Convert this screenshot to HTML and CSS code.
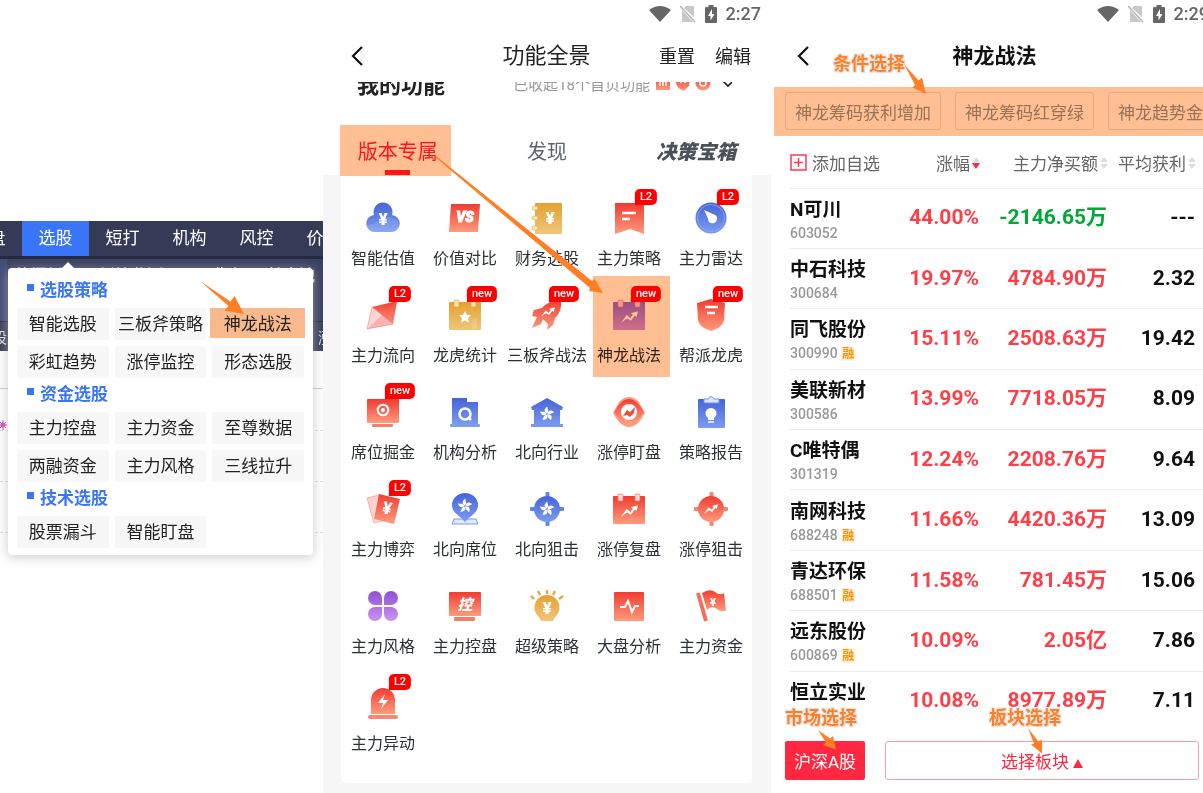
FILE: index.html
```html
<!DOCTYPE html>
<html lang="zh-CN">
<head>
<meta charset="utf-8">
<title>神龙战法</title>
<link rel="stylesheet" href="styles.css">
</head>
<body>
<!-- градиенты и общие значки -->
<svg class="defs" width="0" height="0" aria-hidden="true">
  <defs>
    <linearGradient id="red" x1="0" y1="0" x2="0" y2="1"><stop offset="0" stop-color="#f03c32"/><stop offset="1" stop-color="#ff9b7c"/></linearGradient>
    <linearGradient id="blue" x1="0" y1="0" x2="0" y2="1"><stop offset="0" stop-color="#4663d8"/><stop offset="1" stop-color="#7c9cf0"/></linearGradient>
    <linearGradient id="gold" x1="0" y1="0" x2="0" y2="1"><stop offset="0" stop-color="#e5a02f"/><stop offset="1" stop-color="#efc67c"/></linearGradient>
    <linearGradient id="violet" x1="0" y1="0" x2="0" y2="1"><stop offset="0" stop-color="#8d50d4"/><stop offset="1" stop-color="#cc92ee"/></linearGradient>
    <linearGradient id="plum" x1="0" y1="0" x2="0" y2="1"><stop offset="0" stop-color="#9a66e0"/><stop offset="1" stop-color="#d094f0"/></linearGradient>
    <linearGradient id="pink" x1="0" y1="0" x2="1" y2="1"><stop offset="0" stop-color="#ffc9c9"/><stop offset="1" stop-color="#ffe6e6"/></linearGradient>
    <symbol id="wifi" viewBox="0 0 22 16"><path d="M0 4Q11-4 22 4L11 16Z" fill="#666"/></symbol>
    <symbol id="sim" viewBox="0 0 16 18"><path d="M6 1h8v11L4 3zM2 5l11 12H2z" fill="#c8c8c8"/><path d="M0 1l15 16" stroke="#b4b4b4" stroke-width="1.5"/></symbol>
    <symbol id="battery" viewBox="0 0 12 18"><path d="M3.500 2V0h5v2H11a1 1 0 0 1 1 1v14a1 1 0 0 1-1 1H1a1 1 0 0 1-1-1V3a1 1 0 0 1 1-1z" fill="#666"/><path d="M7 4L3 11h2.500v4.500L9.500 9H7z" fill="#fff"/></symbol>
    <symbol id="back" viewBox="0 0 14 22"><path d="M12 2L3 11l9 9" fill="none" stroke="#111" stroke-width="2.200"/></symbol>
    <symbol id="flower" viewBox="0 0 16 16"><g fill="#fff"><path id="petal" d="M8 7.500C4.500 6 5 2.500 8.500.5 8 3 10.500 4 8 7.500z"/><use href="#petal" transform="rotate(72 8 8)"/><use href="#petal" transform="rotate(144 8 8)"/><use href="#petal" transform="rotate(216 8 8)"/><use href="#petal" transform="rotate(288 8 8)"/></g></symbol>
    <symbol id="bolt" viewBox="0 0 18 12"><path d="M0 12L6 4l4 3 2.500-3.500L10.500 2 18 0l-1.500 6-1.800-1.500L10.500 10 6.500 7.500z" fill="#fff"/></symbol>
    <symbol id="sort" viewBox="0 0 8 12"><path d="M4 0l4 5H0zM4 12l4-5H0z" fill="#ddd"/></symbol>
    <symbol id="sortdown" viewBox="0 0 8 12"><path d="M4 0l4 5H0z" fill="#ddd"/><path d="M4 12l4-6H0z" fill="#ff2840"/></symbol>
  </defs>
</svg>

<div class="page">

<!-- PC menu -->
<section class="desktop">
  <nav class="topnav">
    <a href="#">大盘</a>
    <a href="#" class="active">选股</a>
    <a href="#">短打</a>
    <a href="#">机构</a>
    <a href="#">风控</a>
    <a href="#">价投</a>
  </nav>
  <div class="toolbar"><span>热门板块</span><span>板块监测</span><span>股票期权</span><span>基金池</span></div>
  <div class="tablebar"><span>股</span><span>涨</span></div>
  <div class="chart">
    <svg class="star" width="8" height="10" viewBox="0 0 8 10"><path d="M3 0v10M-1 5h8M0 2l6 6M6 2L0 8" stroke="#d54ac0" stroke-width="1"/><circle cx="3" cy="5" r="2.500" fill="#d54ac0"/></svg>
    <div class="line"></div>
    <div class="line"></div>
    <div class="line"></div>
  </div>

  <div class="dropdown">
    <h2>选股策略</h2>
    <div class="choices">
      <button>智能选股</button><button>三板斧策略</button><button class="picked">神龙战法</button>
      <button>彩虹趋势</button><button>涨停监控</button><button>形态选股</button>
    </div>
    <h2>资金选股</h2>
    <div class="choices">
      <button>主力控盘</button><button>主力资金</button><button>至尊数据</button>
      <button>两融资金</button><button>主力风格</button><button>三线拉升</button>
    </div>
    <h2>技术选股</h2>
    <div class="choices">
      <button>股票漏斗</button><button>智能盯盘</button>
    </div>
  </div>
  <svg class="arrows" aria-hidden="true"><polygon points="200,281 230.500,301.500 234.500,296 244,314 224.500,310.500 228.500,306"/></svg>
</section>

<!-- functions -->
<section class="phone functions">
  <div class="status">
    <svg width="22" height="16"><use href="#wifi"/></svg>
    <svg width="16" height="18"><use href="#sim"/></svg>
    <svg width="12" height="18"><use href="#battery"/></svg>
    <span>2:27</span>
  </div>
  <header class="bar">
    <button class="back" aria-label="返回"><svg width="14" height="22"><use href="#back"/></svg></button>
    <h1>功能全景</h1>
    <div class="actions"><button>重置</button><button>编辑</button></div>
  </header>
  <div class="mine">
    <div class="mine-row">
      <strong>我的功能</strong>
      <span class="folded">已收起18个首页功能</span>
      <svg width="76" height="16" viewBox="0 0 76 16">
        <path d="M0 1h14v14H0z" fill="url(#red)"/><path d="M4 7v4M7 5v6M10 7v4" stroke="#fff" stroke-width="1.500"/>
        <path d="M20 3l6-2 8 2-1 8-5 5-6-3-2-5z" fill="url(#red)"/><path d="M24 8l3-2 2 2 4-3" stroke="#fff" fill="none"/>
        <circle cx="47" cy="8" r="7.500" fill="url(#red)"/><circle cx="47" cy="8" r="3" fill="none" stroke="#fff" stroke-width="1.500"/>
        <path d="M67 6l5 5 5-5" fill="none" stroke="#222" stroke-width="1.600"/>
      </svg>
    </div>
  </div>
  <div class="tabs">
    <button class="on">版本专属</button>
    <button>发现</button>
    <button class="fancy">决策宝箱</button>
  </div>
  <div class="card">
  <div class="grid">
    <a href="#"><svg viewBox="0 0 32 32"><path d="M7 13A9.500 9.500 0 1 1 25 13 8.500 8.500 0 0 1 23.500 30H8.500A8.500 8.500 0 0 1 7 13z" fill="url(#blue)"/><path d="M0 23q9-1 15-6t16 2q3 10-7 11H8q-7 0-8-7z" fill="#fff" opacity=".12"/><text x="16" y="23" class="yen">¥</text></svg>智能估值</a>
    <a href="#"><svg viewBox="0 0 32 32"><path d="M2 2h29l-2 28H0z" fill="url(#red)"/><text x="16" y="20" class="vs">VS</text></svg>价值对比</a>
    <a href="#"><svg viewBox="0 0 32 32"><rect x="4" y="1" width="27" height="31" rx="1" fill="url(#gold)"/><g fill="#fde6b4" stroke="#e5ad50" stroke-width=".7"><rect x="1" y="4" width="6" height="4" rx="2"/><rect x="1" y="14" width="6" height="4" rx="2"/><rect x="1" y="24" width="6" height="4" rx="2"/></g><text x="19" y="22" class="yen">¥</text></svg>财务选股</a>
    <a href="#"><b>L2</b><svg viewBox="0 0 32 32"><path d="M2 1h29v31l-14-5-15 5z" fill="url(#red)"/><path d="M9 11h14M9 17h8" stroke="#fff" stroke-width="2.500"/></svg>主力策略</a>
    <a href="#"><b>L2</b><svg viewBox="0 0 32 32"><circle cx="16" cy="16" r="15.500" fill="url(#blue)"/><circle cx="16" cy="16" r="13.500" fill="none" stroke="#8fa8f4" stroke-width=".8"/><path d="M9 8l10 4.500a4.500 4.500 0 1 1-6 4z" fill="#fff"/></svg>主力雷达</a>

    <a href="#"><b>L2</b><svg viewBox="0 0 32 32"><path d="M5 8l25-6-4 23z" fill="url(#red)"/><path d="M5 8l21 17-26 5z" fill="url(#pink)" stroke="#f28a80" stroke-width=".6"/><path d="M30 2L0 30l26-5z" fill="#f1695c" opacity=".35"/></svg>主力流向</a>
    <a href="#"><b>new</b><svg viewBox="0 0 32 32"><rect y="3" width="32" height="28" rx="1" fill="url(#gold)"/><g fill="#fbe3b5" stroke="#e0a440" stroke-width=".7"><rect x="5" y="1" width="5" height="7" rx="1"/><rect x="22" y="1" width="5" height="7" rx="1"/></g><path d="M16 12l1.800 3.800 4.200.5-3 2.900.8 4.300-3.800-2-3.800 2 .8-4.300-3-2.900 4.200-.5z" fill="#fff"/><path d="M23 30v-9l5-3v12z" fill="#fff" opacity=".15"/></svg>龙虎统计</a>
    <a href="#"><b>new</b><svg viewBox="0 0 32 32"><path d="M30 1Q18 1 11 9L3 11 1 17l5 1-5 11 9-4 2-5 5 5-1 6 6-5 2-7Q31 13 30 1z" fill="url(#red)"/><use href="#bolt" x="10" y="8" width="14" height="10"/></svg>三板斧战法</a>
    <a href="#"><b>new</b><svg viewBox="0 0 32 32"><rect y="3" width="32" height="28" rx="1" fill="url(#plum)"/><g fill="#ffc9e0" stroke="#c98ae0" stroke-width=".7"><rect x="5" y="1" width="5" height="7" rx="1"/><rect x="22" y="1" width="5" height="7" rx="1"/></g><use href="#bolt" x="8" y="12" width="17" height="12"/></svg>神龙战法</a>
    <a href="#"><b>new</b><svg viewBox="0 0 32 32"><path d="M2 4l14-4 14 4-1 17c-1 6-7 9-13 11C10 30 4 27 3 21z" fill="url(#red)"/><path d="M10 8h13M12 14h8" stroke="#fff" stroke-width="2.500"/></svg>帮派龙虎</a>

    <a href="#"><b>new</b><svg viewBox="0 0 32 32"><rect y="3" width="32" height="24" rx="1" fill="url(#red)"/><rect x="5" y="28" width="21" height="3" rx="1" fill="#f0806a"/><circle cx="16" cy="14" r="5.300" fill="none" stroke="#fff" stroke-width="2"/><circle cx="16" cy="14" r="2" fill="#fff"/></svg>席位掘金</a>
    <a href="#"><svg viewBox="0 0 32 32"><path d="M3 2h15v4h11v23H3z" fill="url(#blue)"/><rect x="1" y="28" width="30" height="3" rx="1" fill="#7c9cf0"/><circle cx="16" cy="18" r="5.500" fill="none" stroke="#fff" stroke-width="2.500"/><path d="M19 21l3 3" stroke="#fff" stroke-width="2.500"/></svg>机构分析</a>
    <a href="#"><svg viewBox="0 0 32 32"><path d="M16 2L0 11l1 3h2v14H0v3h32v-3h-3V14h2l1-3z" fill="url(#blue)"/><use href="#flower" x="8" y="10" width="16" height="16"/></svg>北向行业</a>
    <a href="#"><svg viewBox="0 0 32 32"><path d="M0 17Q3 12 6 6 16-4 26 6q3 6 6 11-3 5-6 9-10 10-20 0-3-4-6-9z" fill="#ff9b7c"/><path d="M1 16Q8 3 16 3t15 13q-7 11-15 11T1 16z" fill="url(#red)"/><circle cx="16" cy="16" r="8" fill="#fff"/><path d="M10 20l4-6 3 2 5-5-1 6-4 4-3-2z" fill="#ed4e3b"/></svg>涨停盯盘</a>
    <a href="#"><svg viewBox="0 0 32 32"><rect x="3" y="3" width="27" height="29" rx="1" fill="url(#blue)"/><path d="M9 7V3h4q3-5 6 0h5v4z" fill="#dce5ff" stroke="#7190ed"/><path d="M13 22a5.500 5.500 0 1 1 6 0v2h-6z" fill="#fff"/><path d="M13 26h6" stroke="#fff" stroke-width="1.500"/></svg>策略报告</a>

    <a href="#"><b>L2</b><svg viewBox="0 0 32 32"><path d="M0 5l12-3 7 25-12 3z" fill="url(#pink)" stroke="#f39a90" stroke-width=".7"/><path d="M12 1l21 5-6 25-20-5z" fill="url(#red)"/><text x="20" y="21" class="yen" transform="rotate(12 20 16)">¥</text></svg>主力博弈</a>
    <a href="#"><svg viewBox="0 0 32 32"><path d="M5 26h22l2 5H3z" fill="#e1e9ff" stroke="#7998e9"/><path d="M16 29C10 22 3 20 3 12a13 12 0 0 1 26 0c0 8-7 10-13 17z" fill="url(#blue)"/><use href="#flower" x="8" y="5" width="16" height="16"/></svg>北向席位</a>
    <a href="#"><svg viewBox="0 0 32 32"><g fill="#6685e4"><rect x="14.500" y="-1" width="4" height="8" rx="1"/><rect x="14.500" y="25" width="4" height="8" rx="1"/><rect x="-1" y="14" width="8" height="4" rx="1"/><rect x="25" y="14" width="8" height="4" rx="1"/></g><circle cx="16" cy="16" r="13" fill="url(#blue)"/><use href="#flower" x="8" y="8" width="16" height="16"/></svg>北向狙击</a>
    <a href="#"><svg viewBox="0 0 32 32"><rect y="3" width="32" height="28" rx="1" fill="url(#red)"/><g fill="#ffd9d2" stroke="#ee7365" stroke-width=".7"><rect x="5" y="1" width="5" height="7" rx="1"/><rect x="22" y="1" width="5" height="7" rx="1"/></g><use href="#bolt" x="8" y="12" width="17" height="12"/></svg>涨停复盘</a>
    <a href="#"><svg viewBox="0 0 32 32"><g fill="#f7836d"><rect x="14.500" y="-1" width="4" height="8" rx="1"/><rect x="14.500" y="25" width="4" height="8" rx="1"/><rect x="-1" y="14" width="8" height="4" rx="1"/><rect x="25" y="14" width="8" height="4" rx="1"/></g><circle cx="16" cy="16" r="13" fill="url(#red)"/><use href="#bolt" x="9" y="11" width="14" height="10"/></svg>涨停狙击</a>

    <a href="#"><svg viewBox="0 0 32 32"><path d="M15 15H8a7 7 0 1 1 7-7zM17 15V8a7 7 0 1 1 7 7zM15 17v7a7 7 0 1 1-7-7zM17 17h7a7 7 0 1 1-7 7z" fill="url(#violet)"/></svg>主力风格</a>
    <a href="#"><svg viewBox="0 0 32 32"><rect y="2" width="32" height="24" rx="1" fill="url(#red)"/><rect x="5" y="27" width="21" height="4" rx="1" fill="#f0806a"/><text x="16" y="20" class="kong">控</text></svg>主力控盘</a>
    <a href="#"><svg viewBox="0 0 32 32"><path d="M10 31q-1-3-4-6a12.500 12.500 0 1 1 20 0q-3 3-4 6z" fill="url(#gold)"/><path d="M3 9l-3-3M9 5L7 1M16 4V0M22 5l2-4M28 9l4-3" stroke="#e9aa44" stroke-width="2.500"/><text x="16" y="24" class="yen">¥</text></svg>超级策略</a>
    <a href="#"><svg viewBox="0 0 32 32"><rect x="1" y="2" width="30" height="29" rx="1" fill="url(#red)"/><path d="M7 17h5l3-6 4 11 3-6h4" fill="none" stroke="#fff" stroke-width="2"/></svg>大盘分析</a>
    <a href="#"><svg viewBox="0 0 32 32"><path d="M7 3q8-5 13-1t9 1l2 17q-4 3-9-1t-10 1z" fill="url(#red)"/><path d="M3 3l8 28" stroke="#f0725c" stroke-width="4"/><text x="18" y="16" class="yen small">¥</text></svg>主力资金</a>

    <a href="#"><b>L2</b><svg viewBox="0 0 32 32"><path d="M4 27V13a12 12 0 0 1 24 0v14z" fill="url(#red)"/><rect x="1" y="28" width="30" height="4" rx="2" fill="#f58a70"/><path d="M18 7l-7 9h5l-2 6 7-9h-5z" fill="#fff"/></svg>主力异动</a>
  </div>
  </div>
  <div class="mark mark-tab"></div>
  <div class="mark mark-item"></div>
  <svg class="arrows" aria-hidden="true"><polygon points="113,156 269,281 272,279 280,293 266,291 267,288 112,157"/></svg>
</section>

<!-- stock list -->
<section class="phone stocks">
  <div class="screen">
  <div class="status">
    <svg width="22" height="16"><use href="#wifi"/></svg>
    <svg width="16" height="18"><use href="#sim"/></svg>
    <svg width="12" height="18"><use href="#battery"/></svg>
    <span>2:29</span>
  </div>
  <header class="bar">
    <button class="back" aria-label="返回"><svg width="14" height="22"><use href="#back"/></svg></button>
    <h1>神龙战法</h1>
  </header>
  <div class="chips">
    <button>神龙筹码获利增加</button>
    <button>神龙筹码红穿绿</button>
    <button>神龙趋势金叉</button>
  </div>
  </div>
  <table>
    <thead>
      <tr>
        <th class="name"><button><svg width="17" height="17" viewBox="0 0 17 17"><path d="M1 1h15v15H1zM8.500 4v9M4 8.500h9" fill="none" stroke="#ff3850" stroke-width="1.500"/></svg>添加自选</button></th>
        <th class="rise"><button>涨幅<svg width="8" height="12"><use href="#sortdown"/></svg></button></th>
        <th class="amount"><button>主力净买额<svg width="8" height="12"><use href="#sort"/></svg></button></th>
        <th><button>平均获利<svg width="8" height="12"><use href="#sort"/></svg></button></th>
      </tr>
    </thead>
    <tbody>
      <tr><td><strong>N可川</strong><small>603052</small></td><td>44.00%</td><td class="down">-2146.65万</td><td>---</td></tr>
      <tr><td><strong>中石科技</strong><small>300684</small></td><td>19.97%</td><td>4784.90万</td><td>2.32</td></tr>
      <tr><td><strong>同飞股份</strong><small>300990 <i>融</i></small></td><td>15.11%</td><td>2508.63万</td><td>19.42</td></tr>
      <tr><td><strong>美联新材</strong><small>300586</small></td><td>13.99%</td><td>7718.05万</td><td>8.09</td></tr>
      <tr><td><strong>C唯特偶</strong><small>301319</small></td><td>12.24%</td><td>2208.76万</td><td>9.64</td></tr>
      <tr><td><strong>南网科技</strong><small>688248 <i>融</i></small></td><td>11.66%</td><td>4420.36万</td><td>13.09</td></tr>
      <tr><td><strong>青达环保</strong><small>688501 <i>融</i></small></td><td>11.58%</td><td>781.45万</td><td>15.06</td></tr>
      <tr><td><strong>远东股份</strong><small>600869 <i>融</i></small></td><td>10.09%</td><td>2.05亿</td><td>7.86</td></tr>
      <tr><td><strong>恒立实业</strong><small></small></td><td>10.08%</td><td>8977.89万</td><td>7.11</td></tr>
    </tbody>
  </table>
  <footer>
    <button class="market">沪深A股</button>
    <button class="sector">选择板块 <svg width="10" height="9"><path d="M5 0l5 9H0z" fill="#ff2840"/></svg></button>
  </footer>
  <div class="mark mark-chips"></div>
  <span class="note note-filter">条件选择</span>
  <span class="note note-market">市场选择</span>
  <span class="note note-sector">板块选择</span>
  <svg class="arrows" aria-hidden="true">
    <polygon points="133,64 147.500,80.500 151,77.500 155,94 141.500,87.500 144,85"/>
    <polygon points="47,730 59,738.500 62,736 65,749.500 52,745 55,742.500"/>
    <polygon points="257,728 267,741 271,740 271,753.500 260,744.500 263,743.500"/>
  </svg>
</section>

</div>
</body>
</html>
```

FILE: styles.css
```css
* {
  box-sizing: border-box;
}
body {
  margin: 0;
  background: #fff;
  color: #222;
  font-family: Roboto, "Noto Sans CJK SC", sans-serif;
}
button {
  margin: 0;
  padding: 0;
  border: 0;
  background: none;
  color: inherit;
  font: inherit;
  white-space: nowrap;
}
a {
  color: inherit;
  text-decoration: none;
}
h1, h2 {
  margin: 0;
}
.defs {
  position: absolute;
}
.page {
  display: grid;
  grid-template-columns: 323fr 448fr 432fr;
  min-height: 100vh;
}
.page > section {
  position: relative;
  min-width: 0;
  overflow: hidden;
}

/* стрелки и выделение поверх экранов */
.arrows {
  position: absolute;
  top: 0;
  left: 0;
  width: 100%;
  height: 100%;
  fill: #ff7f27;
  pointer-events: none;
}
.mark {
  position: absolute;
  background: #ffbf93;
  mix-blend-mode: multiply;
  pointer-events: none;
}
.mark-tab {
  left: 17px;
  top: 125px;
  width: 111px;
  height: 51px;
}
.mark-item {
  left: 270px;
  top: 276px;
  width: 77px;
  height: 101px;
}
.mark-chips {
  left: 3px;
  right: 0;
  top: 87px;
  height: 49px;
}

/* desktop */
.desktop {
  padding-top: 221px;
}
.topnav {
  display: flex;
  height: 35px;
  margin-left: -45px;
  background: #353b56;
  color: #fff;
  font-size: 17px;
  line-height: 35px;
  text-align: center;
}
.topnav a {
  flex: 0 0 67px;
}
.topnav .active {
  background: #3875f9;
}
.toolbar {
  display: flex;
  gap: 20px;
  height: 66px;
  padding: 8px 0 0 15px;
  border-top: 3px solid #242a42;
  border-bottom: 1px solid #242a42;
  background: linear-gradient(90deg, #414c77 7px, #3b4160 7px);
  color: #fff;
  font-size: 16px;
  line-height: 18px;
  white-space: nowrap;
}
.tablebar {
  display: flex;
  justify-content: space-between;
  height: 29px;
  margin: 0 -10px 0 -8px;
  background: #3b415c;
  color: #ddd;
  font-size: 15px;
  line-height: 32px;
}
.chart {
  position: relative;
  padding-top: 37px;
}
.chart .line {
  height: 51px;
  border-bottom: 1px dashed #ddd;
}
.chart .line:nth-of-type(1) {
  height: 43px;
  border-top: 1px solid #ccc;
}
.star {
  position: absolute;
  left: 0;
  top: 69px;
}
.dropdown {
  position: absolute;
  left: 8px;
  right: 10px;
  top: 268px;
  padding: 6px 9px 7px;
  border-radius: 4px;
  background: #fff;
  box-shadow: 0 2px 12px rgba(180, 180, 190, 0.7);
}
.dropdown::before {
  content: "";
  position: absolute;
  left: 54px;
  top: -6px;
  border: 6px solid transparent;
  border-top: 0;
  border-bottom-color: #fff;
}
.dropdown h2 {
  display: flex;
  align-items: center;
  gap: 6px;
  height: 34px;
  padding: 0 0 5px 10px;
  color: #3875f9;
  font-size: 17px;
  font-weight: 700;
}
.dropdown h2::before {
  content: "";
  width: 7px;
  height: 7px;
  margin-bottom: 2px;
  background: #3875f9;
}
.choices {
  display: grid;
  grid-template-columns: repeat(3, 1fr);
  gap: 6px;
}
.choices button {
  height: 32px;
  border-radius: 2px;
  background: #f7f7f7;
  font-size: 17px;
  line-height: 32px;
}
.choices .picked {
  height: 30px;
  margin: 0 -1px 0 -2px;
  border-radius: 0;
  background: #f8b98c;
}

/* phone */
.phone {
  display: flex;
  flex-direction: column;
}
.status {
  display: flex;
  align-items: center;
  justify-content: flex-end;
  gap: 9px;
  height: 28px;
  padding: 0 10px 1px 0;
  color: #666;
  font-size: 18px;
  font-weight: 500;
  line-height: 26px;
}
.bar {
  display: grid;
  grid-template-columns: 1fr auto 1fr;
  align-items: center;
  height: 54px;
  padding: 0 19px 0 28px;
}
.bar h1 {
  font-size: 22px;
  font-weight: 400;
  line-height: 32px;
}
.back {
  justify-self: start;
  line-height: 0;
}
.actions {
  display: flex;
  gap: 20px;
  justify-self: end;
  padding-bottom: 2px;
  font-size: 18px;
}
.functions .bar {
  padding: 1px 20px 0 27px;
}
.functions .bar h1 {
  margin-left: -8px;
}
.mine {
  height: 43px;
  overflow: hidden;
}
.mine-row {
  display: flex;
  align-items: center;
  height: 24px;
  margin-top: -11px;
  padding: 0 39px 0 34px;
}
.mine-row strong {
  font-size: 22px;
  font-weight: 700;
}
.folded {
  margin-left: auto;
  margin-right: 6px;
  color: #999;
  font-size: 15px;
}
.tabs {
  display: grid;
  grid-template-columns: repeat(3, 1fr);
  height: 50px;
  color: #5d636d;
  font-size: 20px;
}
.tabs .on {
  position: relative;
  color: #ff1a2c;
}
.tabs .on::after {
  content: "";
  position: absolute;
  left: 50%;
  bottom: 0;
  width: 25px;
  height: 5px;
  margin-left: -13px;
  background: #ff1a2c;
}
.tabs .fancy {
  color: #4b515b;
  font-style: italic;
  font-weight: 900;
}
.card {
  flex: 1;
  padding: 0 19px 10px 18px;
  background: #f6f6f6;
}
.grid {
  display: grid;
  grid-template-columns: repeat(5, 1fr);
  padding: 2px 0 24px 1px;
  border-radius: 0 0 6px 6px;
  background: #fff;
}
.grid a {
  position: relative;
  display: flex;
  flex-direction: column;
  align-items: center;
  gap: 13px;
  height: 97px;
  padding-top: 25px;
  color: #2b2f38;
  font-size: 16px;
  line-height: 24px;
  white-space: nowrap;
}
.grid svg {
  width: 32px;
  height: 32px;
  overflow: visible;
}
.grid b {
  position: absolute;
  z-index: 1;
  left: calc(50% + 17px);
  top: 12px;
  padding: 0 5px;
  border-radius: 5px 5px 5px 0;
  background: #f00;
  color: #fff;
  font-size: 11px;
  font-weight: 500;
  line-height: 16px;
  transform: translateX(-50%);
}
.yen, .vs, .kong {
  fill: #fff;
  font-size: 17px;
  font-weight: 900;
  text-anchor: middle;
}
.vs {
  font-size: 14px;
  font-style: italic;
  stroke: #fff;
}
.kong {
  font-size: 15px;
  font-style: italic;
}
.small {
  font-size: 11px;
}

/* stocks */
.screen {
  margin: 0 -12px 0 3px;
}
.stocks .bar {
  padding: 1px 22px 0;
}
.stocks .status {
  padding-right: 6px;
}
.stocks .bar h1 {
  color: #111;
  font-size: 21px;
  font-weight: 700;
}
.chips {
  display: flex;
  gap: 14px;
  padding: 10px 11px 6px;
  overflow: hidden;
}
.chips button {
  height: 38px;
  padding: 0 9px;
  border: 1px solid #e2e2e2;
  border-radius: 3px;
  color: #999;
  font-size: 17px;
}
.stocks table {
  flex: 1;
  margin-left: 19px;
  border-collapse: collapse;
}
.stocks th {
  height: 52px;
  padding: 2px 0 0;
  color: #666;
  font-size: 17px;
  font-weight: 400;
  text-align: right;
}
.stocks .name {
  width: 25%;
}
.stocks .rise {
  width: 21%;
}
.stocks .amount {
  width: 31%;
}
.stocks th button {
  display: inline-flex;
  align-items: center;
  gap: 2px;
}
.stocks th:first-child {
  text-align: left;
}
.stocks .name button {
  gap: 5px;
}
.stocks th:last-child {
  padding-right: 7px;
}
.stocks tr {
  border-bottom: 1px solid #ededed;
}
.stocks tbody tr:last-child {
  border-bottom: 0;
}
.stocks td {
  padding: 0 1px 2px 0;
  color: #ff3e48;
  font-size: 21px;
  font-weight: 700;
  line-height: 30px;
  text-align: right;
}
.stocks td:first-child {
  padding: 3px 0 0;
  text-align: left;
}
.stocks td:last-child {
  padding-right: 8px;
  color: #111;
}
.stocks .down {
  color: #00a838;
}
.stocks strong {
  display: block;
  color: #111;
  font-size: 19px;
  font-weight: 700;
  line-height: 26px;
}
.stocks small {
  display: block;
  height: 20px;
  color: #999;
  font-size: 14px;
  font-weight: 500;
  line-height: 20px;
}
.stocks i {
  padding: 0 1px;
  background: #fff3e4;
  color: #ff9000;
  font-size: 12px;
  font-style: normal;
  font-weight: 700;
}
.stocks footer {
  display: flex;
  gap: 20px;
  padding: 10px 4px 13px 14px;
  font-size: 17px;
}
.market {
  width: 80px;
  height: 39px;
  border-radius: 2px;
  background: #ff2840;
  color: #fff;
}
.sector {
  flex: 1;
  border: 1px solid #ff9ca8;
  border-radius: 3px;
  color: #ff2840;
}
.note {
  position: absolute;
  color: #ff7f27;
  font-size: 18px;
  font-weight: 700;
  line-height: 24px;
  text-shadow: 0 0 2px #fff, 1px 1px 1px #ccc, -1px -1px 1px #ddd, 1px -1px 1px #ddd, -1px 1px 1px #ddd;
}
.note-filter {
  left: 62px;
  top: 52px;
}
.note-market {
  left: 14px;
  top: 706px;
}
.note-sector {
  left: 218px;
  top: 706px;
}
```
